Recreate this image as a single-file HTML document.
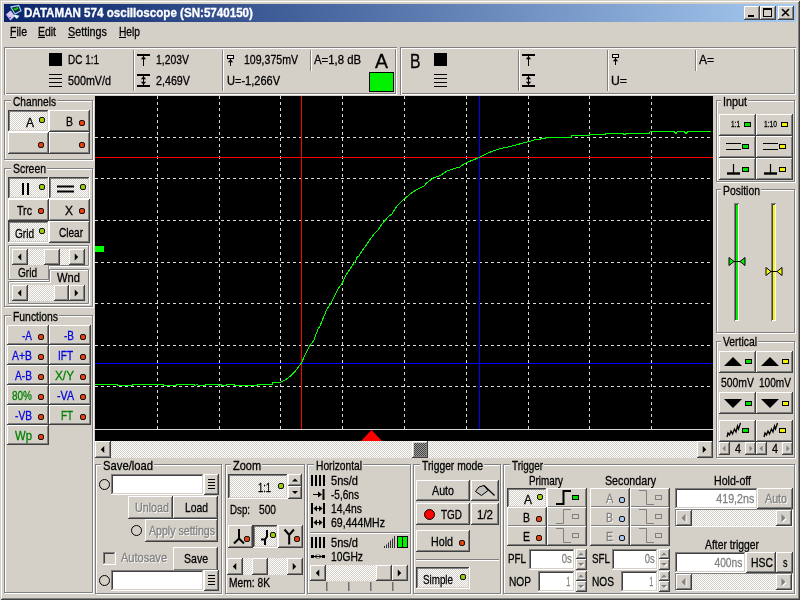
<!DOCTYPE html>
<html><head><meta charset="utf-8"><title>DATAMAN 574 oscilloscope</title>
<style>
html,body{margin:0;padding:0}
body{width:800px;height:600px;overflow:hidden;background:#d4d0c8;position:relative;font-family:"Liberation Sans",sans-serif;font-size:13px;color:#000}
div,span.t,svg.a{position:absolute;box-sizing:border-box}
#root{left:0;top:0;width:800px;height:600px;will-change:transform}
span.t{white-space:nowrap;line-height:1;transform-origin:0 50%;-webkit-text-stroke:0.3px}
.bu{background:#d4d0c8;box-shadow:inset -1px -1px #404040,inset 1px 1px #fff,inset -2px -2px #808080,inset 2px 2px #d4d0c8}
.bd{background:#e9e7e3;background:repeating-conic-gradient(#fff 0 25%,#d4d0c8 0 50%) 0 0/2px 2px;box-shadow:inset -1px -1px #fff,inset 1px 1px #404040,inset -2px -2px #d4d0c8,inset 2px 2px #808080}
.dith{background:repeating-conic-gradient(#fff 0 25%,#d4d0c8 0 50%) 0 0/2px 2px}
.dkd{background:repeating-conic-gradient(#404040 0 25%,#a0a0a0 0 50%) 0 0/2px 2px}
.grp{border:1px solid #808080;box-shadow:1px 1px 0 #fff,inset 1px 1px 0 #fff}
.sunk{background:#fff;box-shadow:inset -1px -1px #fff,inset 1px 1px #808080,inset -2px -2px #d4d0c8,inset 2px 2px #404040}
.led{border-radius:2px;border:1px solid #101010}
.rled{border:1px solid #000}
.dis{color:#808080;text-shadow:1px 1px 0 #fff}
.sm{-webkit-text-stroke:0.35px #000}
</style></head>
<body><div id="root">
<div class="" style="left:0px;top:0px;width:800px;height:600px;box-shadow:inset 1px 1px #d4d0c8,inset -1px -1px #404040,inset 2px 2px #fff,inset -2px -2px #808080;"></div>
<div class="" style="left:4px;top:4px;width:792px;height:18px;background:linear-gradient(90deg,#0a246a 0%,#a6caf0 100%);"></div>
<svg class="a" style="left:4px;top:4px" width="18" height="18" viewBox="0 0 18 18" ><polygon points="2,10.5 6.5,6.5 11,12 6.5,16.5" fill="#d8c8f0"/><polygon points="2,10.5 6.5,16.5 6.5,15 3,10.5" fill="#b8a8d8"/><polygon points="6,2.5 15,0.8 17.8,7 10.8,10.8" fill="#a8d0f8"/><polygon points="7.8,3.4 14.4,2.2 16.3,6.6 11.2,9.2" fill="#102838"/><path d="M9.5 6.5L11 4.2L11.8 6.2L13.2 3.4L14 5.4" stroke="#00ff00" stroke-width="0.9" fill="none"/><polygon points="10.8,10.8 15.5,11.8 12.8,15 9.6,11.8" fill="#e8f4ff"/><rect x="5.5" y="13" width="1.2" height="1.2" fill="#2020ff"/></svg>
<span class="t " style="left:24px;top:6.84px;font-size:12px;transform:scaleX(0.966);color:#fff;font-weight:bold;">DATAMAN 574 oscilloscope (SN:5740150)</span>
<div class="bu " style="left:744px;top:6px;width:16px;height:14px;"></div>
<div class="bu " style="left:760px;top:6px;width:16px;height:14px;"></div>
<div class="bu " style="left:778px;top:6px;width:16px;height:14px;"></div>
<svg class="a" style="left:744px;top:6px" width="50" height="14" viewBox="0 0 50 14" ><rect x="4" y="9" width="6" height="2" fill="#000"/><rect x="19.5" y="2.5" width="8" height="8" fill="none" stroke="#000"/><rect x="19" y="2" width="9" height="2" fill="#000"/><path d="M38 3 L45 10 M45 3 L38 10" stroke="#000" stroke-width="1.6"/></svg>
<span class="t " style="left:10px;top:25.00px;font-size:13px;transform:scaleX(0.812);">File</span>
<span class="t " style="left:38px;top:25.00px;font-size:13px;transform:scaleX(0.804);">Edit</span>
<span class="t " style="left:68px;top:25.00px;font-size:13px;transform:scaleX(0.830);">Settings</span>
<span class="t " style="left:119px;top:25.00px;font-size:13px;transform:scaleX(0.785);">Help</span>
<div class="" style="left:10px;top:37px;width:6px;height:1px;background:#000;"></div>
<div class="" style="left:38px;top:37px;width:7px;height:1px;background:#000;"></div>
<div class="" style="left:68px;top:37px;width:7px;height:1px;background:#000;"></div>
<div class="" style="left:119px;top:37px;width:7px;height:1px;background:#000;"></div>
<div class="" style="left:4px;top:47px;width:393px;height:48px;box-shadow:inset 1px 1px #808080,inset -1px -1px #fff,inset 2px 2px #fff,inset -2px -2px #808080;"></div>
<div class="" style="left:400px;top:47px;width:396px;height:48px;box-shadow:inset 1px 1px #808080,inset -1px -1px #fff,inset 2px 2px #fff,inset -2px -2px #808080;"></div>
<div class="" style="left:49px;top:53px;width:13px;height:13px;background:#000;"></div>
<svg class="a" style="left:49px;top:74px" width="13" height="13" viewBox="0 0 13 13" ><path d="M0 .5h13M0 4.5h13M0 8.5h13M0 12.5h13" stroke="#000"/></svg>
<span class="t " style="left:67.5px;top:53.00px;font-size:13px;transform:scaleX(0.766);">DC 1:1</span>
<span class="t " style="left:67.5px;top:74.00px;font-size:13px;transform:scaleX(0.826);">500mV/d</span>
<div class="" style="left:133px;top:50px;width:1px;height:41px;background:#808080;"></div>
<div class="" style="left:134px;top:50px;width:1px;height:41px;background:#fff;"></div>
<svg class="a" style="left:137px;top:54px" width="13" height="13" viewBox="0 0 13 13" ><rect x="0" y="0" width="13" height="2"/><path d="M6.5 2V12" stroke="#000"/><polygon points="3.8,5.2 9.2,5.2 6.5,2.2"/></svg>
<svg class="a" style="left:137px;top:74px" width="13" height="13" viewBox="0 0 13 13" ><rect x="0" y="0" width="13" height="2"/><rect x="0" y="11" width="13" height="2"/><path d="M6.5 2V11" stroke="#000"/><polygon points="3.8,5.2 9.2,5.2 6.5,2.2"/><polygon points="3.8,7.8 9.2,7.8 6.5,10.8"/></svg>
<span class="t " style="left:156px;top:53.00px;font-size:13px;transform:scaleX(0.801);">1,203V</span>
<span class="t " style="left:156px;top:74.00px;font-size:13px;transform:scaleX(0.825);">2,469V</span>
<div class="" style="left:222px;top:50px;width:1px;height:41px;background:#808080;"></div>
<div class="" style="left:223px;top:50px;width:1px;height:41px;background:#fff;"></div>
<svg class="a" style="left:227px;top:55px" width="8" height="12" viewBox="0 0 8 12" ><rect x="0.5" y="0.5" width="6" height="3" fill="#e8e8e8" stroke="#000"/><path d="M3.5 4V11" stroke="#000"/><polygon points="0.8,7.2 6.2,7.2 3.5,4.2"/></svg>
<span class="t " style="left:243.5px;top:53.00px;font-size:13px;transform:scaleX(0.812);">109,375mV</span>
<span class="t " style="left:227px;top:74.00px;font-size:13px;transform:scaleX(0.848);">U=-1,266V</span>
<div class="" style="left:310px;top:50px;width:1px;height:21px;background:#808080;"></div>
<div class="" style="left:311px;top:50px;width:1px;height:21px;background:#fff;"></div>
<span class="t " style="left:314px;top:53.00px;font-size:13px;transform:scaleX(0.873);">A=1,8 dB</span>
<span class="t " style="left:375px;top:51.07px;font-size:20px;transform:scaleX(0.974);">A</span>
<div class="" style="left:369px;top:72px;width:25px;height:20px;background:#00f000;border:1px solid #000;"></div>
<span class="t " style="left:409.7px;top:51.07px;font-size:20px;transform:scaleX(0.787);">B</span>
<div class="" style="left:434px;top:53px;width:13px;height:13px;background:#000;"></div>
<svg class="a" style="left:434px;top:74px" width="13" height="13" viewBox="0 0 13 13" ><path d="M0 .5h13M0 4.5h13M0 8.5h13M0 12.5h13" stroke="#000"/></svg>
<div class="" style="left:518px;top:50px;width:1px;height:41px;background:#808080;"></div>
<div class="" style="left:519px;top:50px;width:1px;height:41px;background:#fff;"></div>
<svg class="a" style="left:522px;top:54px" width="13" height="13" viewBox="0 0 13 13" ><rect x="0" y="0" width="13" height="2"/><path d="M6.5 2V12" stroke="#000"/><polygon points="3.8,5.2 9.2,5.2 6.5,2.2"/></svg>
<svg class="a" style="left:522px;top:74px" width="13" height="13" viewBox="0 0 13 13" ><rect x="0" y="0" width="13" height="2"/><rect x="0" y="11" width="13" height="2"/><path d="M6.5 2V11" stroke="#000"/><polygon points="3.8,5.2 9.2,5.2 6.5,2.2"/><polygon points="3.8,7.8 9.2,7.8 6.5,10.8"/></svg>
<div class="" style="left:607px;top:50px;width:1px;height:41px;background:#808080;"></div>
<div class="" style="left:608px;top:50px;width:1px;height:41px;background:#fff;"></div>
<svg class="a" style="left:612px;top:54px" width="10" height="13" viewBox="0 0 10 13" ><rect x="0.5" y="0.5" width="6" height="3" fill="#e8e8e8" stroke="#000"/><path d="M3.5 4V11" stroke="#000"/><polygon points="0.8,7.2 6.2,7.2 3.5,4.2"/></svg>
<span class="t " style="left:611px;top:74.00px;font-size:13px;transform:scaleX(0.942);">U=</span>
<div class="" style="left:695px;top:50px;width:1px;height:21px;background:#808080;"></div>
<div class="" style="left:696px;top:50px;width:1px;height:21px;background:#fff;"></div>
<span class="t " style="left:699px;top:53.00px;font-size:13px;transform:scaleX(0.922);">A=</span>
<svg class="a" style="left:95px;top:96px;background:#000" width="618" height="345" viewBox="0 0 618 345"><path d="M62.5 0V333" stroke="#d8d8d8" stroke-dasharray="3 3"/><path d="M124.5 0V333" stroke="#d8d8d8" stroke-dasharray="3 3"/><path d="M185.5 0V333" stroke="#d8d8d8" stroke-dasharray="3 3"/><path d="M247.5 0V333" stroke="#d8d8d8" stroke-dasharray="3 3"/><path d="M309.5 0V333" stroke="#d8d8d8" stroke-dasharray="3 3"/><path d="M371.5 0V333" stroke="#d8d8d8" stroke-dasharray="3 3"/><path d="M433.5 0V333" stroke="#d8d8d8" stroke-dasharray="3 3"/><path d="M494.5 0V333" stroke="#d8d8d8" stroke-dasharray="3 3"/><path d="M556.5 0V333" stroke="#d8d8d8" stroke-dasharray="3 3"/><path d="M0 41.5H618" stroke="#d8d8d8" stroke-dasharray="3 3"/><path d="M0 82.5H618" stroke="#d8d8d8" stroke-dasharray="3 3"/><path d="M0 124.5H618" stroke="#d8d8d8" stroke-dasharray="3 3"/><path d="M0 166.5H618" stroke="#d8d8d8" stroke-dasharray="3 3"/><path d="M0 207.5H618" stroke="#d8d8d8" stroke-dasharray="3 3"/><path d="M0 249.5H618" stroke="#d8d8d8" stroke-dasharray="3 3"/><path d="M0 290.5H618" stroke="#d8d8d8" stroke-dasharray="3 3"/><path d="M0 333.5H618" stroke="#d8d8d8"/><path d="M0 61.5H618" stroke="#ff0000"/><path d="M206.5 0V333" stroke="#ff0000"/><path d="M0 267.5H618" stroke="#0000ff"/><path d="M384.5 0V333" stroke="#0000ff"/><path d="M0.0 288.5 L22.0 288.5 L23.0 289.5 L29.0 289.5 L30.0 289.0 L32.0 289.5 L37.0 289.5 L38.0 288.5 L62.0 288.5 L63.0 289.0 L65.0 288.5 L68.0 288.5 L69.0 289.5 L73.0 289.5 L74.0 289.0 L76.0 289.5 L81.0 289.5 L82.0 288.5 L99.0 288.5 L100.0 289.5 L102.0 288.5 L104.0 289.5 L110.0 289.5 L111.0 288.5 L123.0 288.5 L124.0 289.5 L126.0 288.5 L127.0 289.5 L131.0 289.5 L132.0 288.5 L139.0 288.5 L140.0 289.5 L146.0 289.5 L147.0 289.5 L162.0 289.5 L163.0 288.5 L177.0 288.5 L178.0 286.5 L185.0 286.3 L188.0 285.0 L190.0 284.0 L193.0 282.0 L195.0 280.4 L198.0 277.5 L200.0 275.4 L203.0 271.5 L205.0 269.0 L206.4 267.0 L208.0 263.5 L210.0 259.0 L212.0 255.0 L214.0 251.0 L217.0 247.0 L219.0 244.0 L222.6 234.0 L225.0 230.0 L229.0 220.0 L232.0 213.0 L236.0 207.0 L239.0 201.0 L242.0 195.0 L245.0 190.0 L247.4 187.0 L250.0 181.0 L253.0 176.0 L257.0 170.0 L260.0 166.0 L262.0 161.5 L264.0 160.0 L267.0 155.0 L270.0 151.0 L274.0 145.0 L277.0 141.0 L280.0 137.0 L283.0 134.0 L287.0 128.0 L290.0 124.5 L294.0 120.0 L297.0 118.0 L300.0 113.0 L302.0 110.0 L305.0 107.0 L307.0 105.0 L311.0 101.5 L314.0 99.0 L318.0 96.0 L321.0 94.0 L325.0 92.0 L329.0 90.0 L331.0 87.5 L333.0 86.0 L336.0 83.5 L339.0 81.6 L342.0 80.5 L345.0 79.6 L349.0 77.0 L352.0 75.0 L356.0 73.5 L359.0 72.6 L362.0 71.8 L365.0 71.0 L367.0 69.5 L369.0 68.0 L373.0 66.0 L377.0 64.4 L381.0 62.8 L384.0 61.4 L389.0 59.0 L393.0 57.0 L398.0 55.0 L403.0 53.4 L408.0 52.0 L413.0 51.0 L417.0 50.0 L421.0 49.0 L426.0 47.6 L430.0 46.6 L435.0 45.3 L441.0 43.5 L445.5 43.5 L446.0 42.5 L450.0 42.5 L451.0 41.5 L476.0 41.5 L477.0 39.5 L494.0 39.5 L495.0 38.5 L510.0 38.5 L511.0 37.5 L528.0 37.5 L529.5 38.8 L531.0 37.5 L554.0 37.5 L555.5 35.5 L579.0 35.5 L581.0 37.5 L582.5 35.5 L589.0 35.5 L591.0 37.5 L593.0 35.5 L616.0 35.5" stroke="#00ff00" stroke-width="1" fill="none" shape-rendering="crispEdges"/><rect x="0" y="150" width="9" height="6" fill="#00ff00"/><polygon points="276.5,334 266,345 287,345" fill="#ff0000"/></svg>
<div class="dith" style="left:95px;top:441px;width:618px;height:17px;"></div>
<div class="bu " style="left:95px;top:441px;width:16px;height:17px;"></div>
<div class="bu " style="left:697px;top:441px;width:16px;height:17px;"></div>
<svg class="a" style="left:95px;top:441px" width="618" height="17" viewBox="0 0 618 17" ><polygon points="9.25,5.0 9.25,12.0 5.75,8.5" fill="#000"/><polygon points="607.75,5.0 607.75,12.0 611.25,8.5" fill="#000"/></svg>
<div class="bu dkd" style="left:412px;top:441px;width:16px;height:17px;"></div>
<div class="grp" style="left:4px;top:100px;width:89px;height:60px;"></div>
<div class="" style="left:11px;top:95px;width:46px;height:13px;background:#d4d0c8;"></div>
<span class="t " style="left:13px;top:95.00px;font-size:13px;transform:scaleX(0.783);">Channels</span>
<div class="bd " style="left:8px;top:110px;width:41px;height:22px;"></div>
<div class="bu " style="left:49px;top:110px;width:41px;height:22px;"></div>
<div class="bu " style="left:8px;top:132px;width:41px;height:22px;"></div>
<div class="bu " style="left:49px;top:132px;width:41px;height:22px;"></div>
<span class="t " style="left:26px;top:116.00px;font-size:13px;transform:scaleX(0.923);">A</span>
<div class="led" style="left:39px;top:117px;width:6px;height:6px;background:#9acd0a;"></div>
<span class="t " style="left:66px;top:115.00px;font-size:13px;transform:scaleX(0.807);">B</span>
<div class="led" style="left:79px;top:120px;width:6px;height:6px;background:#e8400a;"></div>
<div class="led" style="left:38px;top:142px;width:6px;height:6px;background:#e8400a;"></div>
<div class="led" style="left:79px;top:142px;width:6px;height:6px;background:#e8400a;"></div>
<div class="grp" style="left:4px;top:168px;width:89px;height:139px;"></div>
<div class="" style="left:11px;top:163px;width:36px;height:13px;background:#d4d0c8;"></div>
<span class="t " style="left:13px;top:162.00px;font-size:13px;transform:scaleX(0.801);">Screen</span>
<div class="bd " style="left:8px;top:177px;width:41px;height:22px;"></div>
<div class="bd " style="left:49px;top:177px;width:41px;height:22px;"></div>
<div class="bu " style="left:8px;top:199px;width:41px;height:22px;"></div>
<div class="bu " style="left:49px;top:199px;width:41px;height:22px;"></div>
<div class="bd " style="left:8px;top:221px;width:41px;height:22px;"></div>
<div class="bu " style="left:49px;top:221px;width:41px;height:22px;"></div>
<svg class="a" style="left:20px;top:182px" width="12" height="13" viewBox="0 0 12 13" ><path d="M3 1v12M8 1v12" stroke="#000" stroke-width="2"/></svg>
<div class="led" style="left:39px;top:184px;width:6px;height:6px;background:#9acd0a;"></div>
<svg class="a" style="left:57px;top:182px" width="18" height="12" viewBox="0 0 18 12" ><path d="M0 4.5h17M0 9.5h17" stroke="#000" stroke-width="2"/></svg>
<div class="led" style="left:80px;top:184px;width:6px;height:6px;background:#9acd0a;"></div>
<span class="t " style="left:17px;top:204.00px;font-size:13px;transform:scaleX(0.820);">Trc</span>
<div class="led" style="left:38px;top:208px;width:6px;height:6px;background:#e8400a;"></div>
<span class="t " style="left:65px;top:204.00px;font-size:13px;transform:scaleX(0.923);">X</span>
<div class="led" style="left:79px;top:208px;width:6px;height:6px;background:#e8400a;"></div>
<span class="t " style="left:14.5px;top:227.00px;font-size:13px;transform:scaleX(0.774);">Grid</span>
<div class="led" style="left:39px;top:228px;width:6px;height:6px;background:#9acd0a;"></div>
<span class="t " style="left:58.5px;top:226.00px;font-size:13px;transform:scaleX(0.773);">Clear</span>
<svg class="a" style="left:0px;top:0px" width="100" height="310" viewBox="0 0 100 310" ><g fill="none"><g transform="translate(1,1)" stroke="#fff"><path d="M8.5 245.5H88.5V265.5H48.5V279.5H8.5Z"/><path d="M8.5 281.5H49.5V269.5H88.5V303.5H8.5Z"/></g><g stroke="#808080"><path d="M8.5 245.5H88.5V265.5H48.5V279.5H8.5Z"/><path d="M8.5 281.5H49.5V269.5H88.5V303.5H8.5Z"/></g></g></svg>
<div class="dith" style="left:12px;top:249px;width:73px;height:16px;"></div>
<div class="bu " style="left:12px;top:249px;width:16px;height:16px;"></div>
<div class="bu " style="left:69px;top:249px;width:16px;height:16px;"></div>
<svg class="a" style="left:12px;top:249px" width="73" height="16" viewBox="0 0 73 16" ><polygon points="9.25,4.5 9.25,11.5 5.75,8.0" fill="#000"/><polygon points="62.75,4.5 62.75,11.5 66.25,8.0" fill="#000"/></svg>
<div class="bu " style="left:44px;top:249px;width:16px;height:16px;"></div>
<span class="t " style="left:17.5px;top:266.00px;font-size:13px;transform:scaleX(0.774);">Grid</span>
<span class="t " style="left:57px;top:271.00px;font-size:13px;transform:scaleX(0.860);">Wnd</span>
<div class="dith" style="left:12px;top:285px;width:73px;height:16px;"></div>
<div class="bu " style="left:12px;top:285px;width:16px;height:16px;"></div>
<div class="bu " style="left:69px;top:285px;width:16px;height:16px;"></div>
<svg class="a" style="left:12px;top:285px" width="73" height="16" viewBox="0 0 73 16" ><polygon points="9.25,4.5 9.25,11.5 5.75,8.0" fill="#000"/><polygon points="62.75,4.5 62.75,11.5 66.25,8.0" fill="#000"/></svg>
<div class="bu " style="left:54px;top:285px;width:15px;height:16px;"></div>
<div class="grp" style="left:4px;top:315px;width:89px;height:278px;"></div>
<div class="" style="left:11px;top:310px;width:48px;height:13px;background:#d4d0c8;"></div>
<span class="t " style="left:13px;top:310.00px;font-size:13px;transform:scaleX(0.798);">Functions</span>
<div class="bu " style="left:7px;top:325px;width:42px;height:20px;"></div>
<span class="t " style="left:22px;top:329.00px;font-size:13px;transform:scaleX(0.769);color:#0000e0;">-A</span>
<div class="led" style="left:38px;top:334px;width:6px;height:6px;background:#e8400a;"></div>
<div class="bu " style="left:49px;top:325px;width:42px;height:20px;"></div>
<span class="t " style="left:64px;top:329.00px;font-size:13px;transform:scaleX(0.769);color:#0000e0;">-B</span>
<div class="led" style="left:80px;top:334px;width:6px;height:6px;background:#e8400a;"></div>
<div class="bu " style="left:7px;top:345px;width:42px;height:20px;"></div>
<span class="t " style="left:12px;top:349.00px;font-size:13px;transform:scaleX(0.802);color:#0000e0;">A+B</span>
<div class="led" style="left:38px;top:354px;width:6px;height:6px;background:#e8400a;"></div>
<div class="bu " style="left:49px;top:345px;width:42px;height:20px;"></div>
<span class="t " style="left:58px;top:349.00px;font-size:13px;transform:scaleX(0.769);color:#0000e0;">IFT</span>
<div class="led" style="left:80px;top:354px;width:6px;height:6px;background:#e8400a;"></div>
<div class="bu " style="left:7px;top:365px;width:42px;height:20px;"></div>
<span class="t " style="left:14.5px;top:369.00px;font-size:13px;transform:scaleX(0.784);color:#0000e0;">A-B</span>
<div class="led" style="left:38px;top:374px;width:6px;height:6px;background:#e8400a;"></div>
<div class="bu " style="left:49px;top:365px;width:42px;height:20px;"></div>
<span class="t " style="left:55px;top:369.00px;font-size:13px;transform:scaleX(0.907);color:#008000;">X/Y</span>
<div class="led" style="left:80px;top:374px;width:6px;height:6px;background:#e8400a;"></div>
<div class="bu " style="left:7px;top:385px;width:42px;height:20px;"></div>
<span class="t " style="left:12px;top:389.00px;font-size:13px;transform:scaleX(0.769);color:#008000;">80%</span>
<div class="led" style="left:38px;top:394px;width:6px;height:6px;background:#e8400a;"></div>
<div class="bu " style="left:49px;top:385px;width:42px;height:20px;"></div>
<span class="t " style="left:57px;top:389.00px;font-size:13px;transform:scaleX(0.821);color:#0000e0;">-VA</span>
<div class="led" style="left:80px;top:394px;width:6px;height:6px;background:#e8400a;"></div>
<div class="bu " style="left:7px;top:405px;width:42px;height:20px;"></div>
<span class="t " style="left:15px;top:409.00px;font-size:13px;transform:scaleX(0.784);color:#0000e0;">-VB</span>
<div class="led" style="left:38px;top:414px;width:6px;height:6px;background:#e8400a;"></div>
<div class="bu " style="left:49px;top:405px;width:42px;height:20px;"></div>
<span class="t " style="left:61px;top:409.00px;font-size:13px;transform:scaleX(0.756);color:#008000;">FT</span>
<div class="led" style="left:80px;top:414px;width:6px;height:6px;background:#e8400a;"></div>
<div class="bu " style="left:7px;top:425px;width:42px;height:20px;"></div>
<span class="t " style="left:15px;top:429.00px;font-size:13px;transform:scaleX(0.872);color:#008000;">Wp</span>
<div class="led" style="left:38px;top:434px;width:6px;height:6px;background:#e8400a;"></div>
<div class="grp" style="left:716px;top:100px;width:79px;height:82px;"></div>
<div class="" style="left:721px;top:95px;width:27px;height:13px;background:#d4d0c8;"></div>
<span class="t " style="left:723px;top:95.00px;font-size:13px;transform:scaleX(0.830);">Input</span>
<div class="bu " style="left:719px;top:114px;width:37px;height:22px;"></div>
<div class="bu " style="left:756px;top:114px;width:37px;height:22px;"></div>
<div class="bu " style="left:719px;top:136px;width:37px;height:22px;"></div>
<div class="bu " style="left:756px;top:136px;width:37px;height:22px;"></div>
<div class="bu " style="left:719px;top:158px;width:37px;height:22px;"></div>
<div class="bu " style="left:756px;top:158px;width:37px;height:22px;"></div>
<div class="rled" style="left:744px;top:122px;width:7px;height:5px;background:#00e000;"></div>
<div class="rled" style="left:781px;top:122px;width:7px;height:5px;background:#f0f000;"></div>
<div class="rled" style="left:742px;top:144px;width:7px;height:5px;background:#00e000;"></div>
<div class="rled" style="left:779px;top:144px;width:7px;height:5px;background:#f0f000;"></div>
<div class="rled" style="left:742px;top:167px;width:7px;height:5px;background:#00e000;"></div>
<div class="rled" style="left:779px;top:167px;width:7px;height:5px;background:#f0f000;"></div>
<span class="t sm" style="left:731px;top:120.38px;font-size:9px;transform:scaleX(0.719);">1:1</span>
<span class="t sm" style="left:764px;top:120.38px;font-size:9px;transform:scaleX(0.742);">1:10</span>
<svg class="a" style="left:726px;top:140px" width="16" height="12" viewBox="0 0 16 12" ><path d="M0 3.5H15M0 9.5H15" stroke="#000" stroke-width="1.2"/></svg>
<svg class="a" style="left:727px;top:163px" width="14" height="13" viewBox="0 0 14 13" ><path d="M6.5 1V10" stroke="#000" stroke-width="1.2"/><path d="M0 10.5H13" stroke="#000" stroke-width="2.4"/></svg>
<svg class="a" style="left:763px;top:140px" width="16" height="12" viewBox="0 0 16 12" ><path d="M0 3.5H15M0 9.5H15" stroke="#000" stroke-width="1.2"/></svg>
<svg class="a" style="left:764px;top:163px" width="14" height="13" viewBox="0 0 14 13" ><path d="M6.5 1V10" stroke="#000" stroke-width="1.2"/><path d="M0 10.5H13" stroke="#000" stroke-width="2.4"/></svg>
<div class="grp" style="left:716px;top:189px;width:79px;height:144px;"></div>
<div class="" style="left:721px;top:184px;width:40px;height:13px;background:#d4d0c8;"></div>
<span class="t " style="left:723px;top:184.00px;font-size:13px;transform:scaleX(0.800);">Position</span>
<div class="" style="left:734px;top:203px;width:5px;height:118px;background:#00f000;box-shadow:inset 1px 1px #808080,inset -1px -1px #fff,inset 2px 2px #404040;"></div>
<svg class="a" style="left:727.5px;top:256px" width="18" height="11" viewBox="0 0 18 11" ><polygon points="1,1.5 1,9.5 6,5.5" fill="#00f000" stroke="#000"/><polygon points="17,1.5 17,9.5 12,5.5" fill="#00f000" stroke="#000"/><path d="M6 5.5H12" stroke="#000"/></svg>
<div class="" style="left:771px;top:203px;width:5px;height:118px;background:#f8f800;box-shadow:inset 1px 1px #808080,inset -1px -1px #fff,inset 2px 2px #404040;"></div>
<svg class="a" style="left:764.5px;top:266px" width="18" height="11" viewBox="0 0 18 11" ><polygon points="1,1.5 1,9.5 6,5.5" fill="#f8f800" stroke="#000"/><polygon points="17,1.5 17,9.5 12,5.5" fill="#f8f800" stroke="#000"/><path d="M6 5.5H12" stroke="#000"/></svg>
<div class="grp" style="left:716px;top:341px;width:79px;height:117px;"></div>
<div class="" style="left:721px;top:336px;width:37px;height:13px;background:#d4d0c8;"></div>
<span class="t " style="left:723px;top:335.00px;font-size:13px;transform:scaleX(0.798);">Vertical</span>
<div class="bu " style="left:719px;top:351px;width:37px;height:22px;"></div>
<div class="bu " style="left:719px;top:392px;width:37px;height:22px;"></div>
<div class="bu " style="left:719px;top:420px;width:37px;height:22px;"></div>
<svg class="a" style="left:720px;top:351px" width="36" height="22" viewBox="0 0 36 22" ><polygon points="4,15 22,15 13,6" fill="#000"/></svg>
<div class="rled" style="left:745px;top:359px;width:7px;height:5px;background:#00e000;"></div>
<svg class="a" style="left:720px;top:392px" width="36" height="22" viewBox="0 0 36 22" ><polygon points="4,7 22,7 13,16" fill="#000"/></svg>
<div class="rled" style="left:745px;top:401px;width:7px;height:5px;background:#00e000;"></div>
<svg class="a" style="left:720px;top:420px" width="36" height="22" viewBox="0 0 36 22" ><path d="M7 17L8 13L9.5 15L11 11L12.5 14L14.5 9L16 12L17.5 6L18.5 9L20.5 3" stroke="#000" stroke-width="1.3" fill="none"/></svg>
<div class="rled" style="left:742px;top:428px;width:7px;height:5px;background:#00e000;"></div>
<div class="bu " style="left:719px;top:442px;width:11px;height:13px;"></div>
<div class="bu " style="left:745px;top:442px;width:11px;height:13px;"></div>
<svg class="a" style="left:719px;top:442px" width="37" height="13" viewBox="0 0 37 13" ><polygon points="6.5,3.5 6.5,9.5 3.5,6.5" fill="#808080"/><polygon points="30.5,3.5 30.5,9.5 33.5,6.5" fill="#808080"/></svg>
<span class="t " style="left:735px;top:442.00px;font-size:13px;transform:scaleX(0.830);">4</span>
<div class="bu " style="left:756px;top:351px;width:37px;height:22px;"></div>
<div class="bu " style="left:756px;top:392px;width:37px;height:22px;"></div>
<div class="bu " style="left:756px;top:420px;width:37px;height:22px;"></div>
<svg class="a" style="left:757px;top:351px" width="36" height="22" viewBox="0 0 36 22" ><polygon points="4,15 22,15 13,6" fill="#000"/></svg>
<div class="rled" style="left:782px;top:359px;width:7px;height:5px;background:#f0f000;"></div>
<svg class="a" style="left:757px;top:392px" width="36" height="22" viewBox="0 0 36 22" ><polygon points="4,7 22,7 13,16" fill="#000"/></svg>
<div class="rled" style="left:782px;top:401px;width:7px;height:5px;background:#f0f000;"></div>
<svg class="a" style="left:757px;top:420px" width="36" height="22" viewBox="0 0 36 22" ><path d="M7 17L8 13L9.5 15L11 11L12.5 14L14.5 9L16 12L17.5 6L18.5 9L20.5 3" stroke="#000" stroke-width="1.3" fill="none"/></svg>
<div class="rled" style="left:779px;top:428px;width:7px;height:5px;background:#f0f000;"></div>
<div class="bu " style="left:756px;top:442px;width:11px;height:13px;"></div>
<div class="bu " style="left:782px;top:442px;width:11px;height:13px;"></div>
<svg class="a" style="left:756px;top:442px" width="37" height="13" viewBox="0 0 37 13" ><polygon points="6.5,3.5 6.5,9.5 3.5,6.5" fill="#808080"/><polygon points="30.5,3.5 30.5,9.5 33.5,6.5" fill="#808080"/></svg>
<span class="t " style="left:772px;top:442.00px;font-size:13px;transform:scaleX(0.830);">4</span>
<span class="t " style="left:721px;top:376.00px;font-size:13px;transform:scaleX(0.801);">500mV</span>
<span class="t " style="left:759px;top:376.00px;font-size:13px;transform:scaleX(0.777);">100mV</span>
<div class="grp" style="left:95px;top:464px;width:127px;height:130px;"></div>
<div class="" style="left:101px;top:459px;width:53px;height:13px;background:#d4d0c8;"></div>
<span class="t " style="left:103px;top:459.00px;font-size:13px;transform:scaleX(0.865);">Save/load</span>
<div class="" style="left:98.5px;top:479.0px;width:11px;height:11px;border:1px solid #000;border-radius:50%;"></div>
<div class="sunk" style="left:111px;top:474px;width:93px;height:21px;"></div>
<div class="bu " style="left:204px;top:474px;width:15px;height:21px;"></div>
<svg class="a" style="left:204px;top:474px" width="15" height="21" viewBox="0 0 15 21" ><path d="M4 5.5h7M4 8.5h7M4 11.5h7M4 14.5h7" stroke="#000"/></svg>
<div class="bu " style="left:128px;top:496px;width:45px;height:23px;"></div>
<div class="bu " style="left:173px;top:496px;width:45px;height:23px;"></div>
<span class="t dis" style="left:135px;top:501.00px;font-size:13px;transform:scaleX(0.825);">Unload</span>
<span class="t " style="left:185px;top:501.00px;font-size:13px;transform:scaleX(0.795);">Load</span>
<div class="" style="left:131.0px;top:525.0px;width:11px;height:11px;border:1px solid #000;border-radius:50%;"></div>
<div class="bu " style="left:145px;top:519px;width:73px;height:23px;"></div>
<span class="t dis" style="left:149px;top:524.00px;font-size:13px;transform:scaleX(0.815);">Apply settings</span>
<div class="" style="left:103px;top:552px;width:13px;height:13px;background:#d4d0c8;box-shadow:inset -1px -1px #fff,inset 1px 1px #808080,inset -2px -2px #d4d0c8,inset 2px 2px #404040;"></div>
<span class="t dis" style="left:121px;top:551.00px;font-size:13px;transform:scaleX(0.849);">Autosave</span>
<div class="bu " style="left:173px;top:547px;width:45px;height:24px;"></div>
<span class="t " style="left:184px;top:552.00px;font-size:13px;transform:scaleX(0.810);">Save</span>
<div class="" style="left:98.5px;top:575.0px;width:11px;height:11px;border:1px solid #000;border-radius:50%;"></div>
<div class="sunk" style="left:111px;top:570px;width:93px;height:21px;"></div>
<div class="bu " style="left:204px;top:570px;width:15px;height:21px;"></div>
<svg class="a" style="left:204px;top:570px" width="15" height="21" viewBox="0 0 15 21" ><path d="M4 5.5h7M4 8.5h7M4 11.5h7M4 14.5h7" stroke="#000"/></svg>
<div class="grp" style="left:225px;top:464px;width:80px;height:130px;"></div>
<div class="" style="left:230.5px;top:459px;width:31px;height:13px;background:#d4d0c8;"></div>
<span class="t " style="left:232.5px;top:459.00px;font-size:13px;transform:scaleX(0.843);">Zoom</span>
<div class="bd " style="left:228px;top:474px;width:60px;height:25px;"></div>
<span class="t " style="left:258px;top:481.00px;font-size:13px;transform:scaleX(0.719);">1:1</span>
<div class="led" style="left:277.5px;top:483px;width:6px;height:6px;background:#9acd0a;"></div>
<div class="bu " style="left:288px;top:474px;width:14px;height:12px;"></div>
<div class="bu " style="left:288px;top:486px;width:14px;height:13px;"></div>
<svg class="a" style="left:288px;top:474px" width="14" height="25" viewBox="0 0 14 25" ><polygon points="4,7.5 10,7.5 7,4.5" fill="#000"/><polygon points="4,17.0 10,17.0 7,20.0" fill="#000"/></svg>
<span class="t " style="left:230px;top:503.00px;font-size:13px;transform:scaleX(0.748);">Dsp:</span>
<span class="t " style="left:259px;top:503.00px;font-size:13px;transform:scaleX(0.784);">500</span>
<div class="bu " style="left:228px;top:525px;width:25px;height:23px;"></div>
<div class="bd " style="left:253px;top:525px;width:25px;height:23px;"></div>
<div class="bu " style="left:278px;top:525px;width:25px;height:23px;"></div>
<svg class="a" style="left:228px;top:525px" width="25" height="23" viewBox="0 0 25 23" ><path d="M11 4V14.5M11 13.5L6 18.5M11 13.5L16 18.5" stroke="#000" stroke-width="2" fill="none"/></svg>
<div class="led" style="left:244px;top:536px;width:6px;height:6px;background:#e8400a;"></div>
<svg class="a" style="left:253px;top:525px" width="25" height="23" viewBox="0 0 25 23" ><path d="M14 5V11.5L12 14.5V20M8 14.5H12.5" stroke="#000" stroke-width="2" fill="none"/></svg>
<div class="led" style="left:270px;top:532px;width:6px;height:6px;background:#9acd0a;"></div>
<svg class="a" style="left:278px;top:525px" width="25" height="23" viewBox="0 0 25 23" ><path d="M6.5 4.5L11.2 10L15.9 4.5M11.2 9.5V19.5" stroke="#000" stroke-width="2" fill="none"/></svg>
<div class="led" style="left:294px;top:536px;width:6px;height:6px;background:#e8400a;"></div>
<div class="dith" style="left:227px;top:558px;width:76px;height:17px;"></div>
<div class="bu " style="left:227px;top:558px;width:16px;height:17px;"></div>
<div class="bu " style="left:287px;top:558px;width:16px;height:17px;"></div>
<svg class="a" style="left:227px;top:558px" width="76" height="17" viewBox="0 0 76 17" ><polygon points="9.25,5.0 9.25,12.0 5.75,8.5" fill="#000"/><polygon points="65.75,5.0 65.75,12.0 69.25,8.5" fill="#000"/></svg>
<div class="bu " style="left:252px;top:558px;width:16px;height:17px;"></div>
<span class="t " style="left:229px;top:576.00px;font-size:13px;transform:scaleX(0.788);">Mem: 8K</span>
<div class="grp" style="left:307px;top:464px;width:104px;height:130px;"></div>
<div class="" style="left:314px;top:459px;width:49px;height:13px;background:#d4d0c8;"></div>
<span class="t " style="left:316px;top:459.00px;font-size:13px;transform:scaleX(0.786);">Horizontal</span>
<svg class="a" style="left:311px;top:475px" width="14" height="11" viewBox="0 0 14 11" ><path d="M1 0V11M5 0V11M9 0V11M13 0V11" stroke="#000" stroke-width="2"/></svg>
<span class="t " style="left:331px;top:474.00px;font-size:13px;transform:scaleX(0.849);">5ns/d</span>
<svg class="a" style="left:311px;top:489px" width="15" height="11" viewBox="0 0 15 11" ><path d="M2 5.5H10" stroke="#000"/><polygon points="7,2.5 11,5.5 7,8.5" fill="#000"/><path d="M12.5 0V11" stroke="#000" stroke-width="2"/></svg>
<span class="t " style="left:331px;top:488.00px;font-size:13px;transform:scaleX(0.775);">-5,6ns</span>
<svg class="a" style="left:311px;top:503px" width="14" height="11" viewBox="0 0 14 11" ><path d="M1 0V11M13 0V11" stroke="#000" stroke-width="2"/><path d="M3 5.5H11" stroke="#000"/><polygon points="2.5,5.5 6,2.5 6,8.5" fill="#000"/><polygon points="11.5,5.5 8,2.5 8,8.5" fill="#000"/></svg>
<span class="t " style="left:331px;top:502.00px;font-size:13px;transform:scaleX(0.794);">14,4ns</span>
<svg class="a" style="left:311px;top:517px" width="14" height="11" viewBox="0 0 14 11" ><path d="M1 0V11M13 0V11" stroke="#000" stroke-width="2"/><path d="M3 5.5H11" stroke="#000"/><polygon points="2.5,5.5 6,2.5 6,8.5" fill="#000"/><polygon points="11.5,5.5 8,2.5 8,8.5" fill="#000"/></svg>
<span class="t " style="left:331px;top:516.00px;font-size:13px;transform:scaleX(0.812);">69,444MHz</span>
<div class="" style="left:310px;top:532px;width:99px;height:2px;border-top:1px solid #808080;border-bottom:1px solid #fff;"></div>
<svg class="a" style="left:311px;top:537px" width="14" height="11" viewBox="0 0 14 11" ><path d="M1 0V11M5 0V11M9 0V11M13 0V11" stroke="#000" stroke-width="2"/></svg>
<span class="t " style="left:331px;top:536.00px;font-size:13px;transform:scaleX(0.849);">5ns/d</span>
<svg class="a" style="left:311px;top:552px" width="15" height="9" viewBox="0 0 15 9" ><rect x="0" y="3" width="3" height="3" fill="#000"/><rect x="11" y="3" width="3" height="3" fill="#000"/><path d="M3 4.5H11" stroke="#000"/><path d="M6 2.5L4 4.5L6 6.5M8 2.5L10 4.5L8 6.5" stroke="#000" fill="none"/></svg>
<span class="t " style="left:331px;top:550.00px;font-size:13px;transform:scaleX(0.791);">10GHz</span>
<svg class="a" style="left:384px;top:536px" width="12" height="12" viewBox="0 0 12 12" ><path d="M0.5 12V10M2.5 12V8.5M4.5 12V6.5M6.5 12V4.5M8.5 12V2.5M10.5 12V0" stroke="#303030"/></svg>
<div class="" style="left:397px;top:536px;width:11px;height:12px;background:#00f000;border:1px solid #000;"></div>
<div class="" style="left:402px;top:536px;width:1px;height:12px;background:#000;"></div>
<div class="dith" style="left:310px;top:565px;width:98px;height:16px;"></div>
<div class="bu " style="left:310px;top:565px;width:16px;height:16px;"></div>
<div class="bu " style="left:392px;top:565px;width:16px;height:16px;"></div>
<svg class="a" style="left:310px;top:565px" width="98" height="16" viewBox="0 0 98 16" ><polygon points="9.25,4.5 9.25,11.5 5.75,8.0" fill="#000"/><polygon points="87.75,4.5 87.75,11.5 91.25,8.0" fill="#000"/></svg>
<div class="bu " style="left:376px;top:565px;width:16px;height:16px;"></div>
<div class="" style="left:326px;top:582px;width:2px;height:9px;border-left:1px solid #707070;border-right:1px solid #a0a0a0;"></div>
<div class="" style="left:348px;top:582px;width:2px;height:9px;border-left:1px solid #707070;border-right:1px solid #a0a0a0;"></div>
<div class="" style="left:370px;top:582px;width:2px;height:9px;border-left:1px solid #707070;border-right:1px solid #a0a0a0;"></div>
<div class="" style="left:392px;top:582px;width:2px;height:9px;border-left:1px solid #707070;border-right:1px solid #a0a0a0;"></div>
<div class="grp" style="left:413px;top:464px;width:88px;height:130px;"></div>
<div class="" style="left:419.5px;top:459px;width:64px;height:13px;background:#d4d0c8;"></div>
<span class="t " style="left:421.5px;top:459.00px;font-size:13px;transform:scaleX(0.794);">Trigger mode</span>
<div class="bu " style="left:416px;top:480px;width:54px;height:21px;"></div>
<span class="t " style="left:431.5px;top:484.00px;font-size:13px;transform:scaleX(0.823);">Auto</span>
<div class="bu " style="left:471px;top:480px;width:28px;height:21px;"></div>
<svg class="a" style="left:471px;top:480px" width="27" height="21" viewBox="0 0 27 21" ><polygon points="4.5,11.5 8,7 13,5.5 17,10.5 10.5,15.5" fill="#c0c0c0" stroke="#000"/><path d="M13 5.5L23.5 15.5" stroke="#000" stroke-width="1.2"/></svg>
<div class="bu " style="left:416px;top:503px;width:54px;height:22px;"></div>
<div class="" style="left:424px;top:509px;width:11px;height:11px;background:#ff0000;border:1px solid #000;border-radius:50%;"></div>
<span class="t " style="left:440.5px;top:508.00px;font-size:13px;transform:scaleX(0.765);">TGD</span>
<div class="bu " style="left:471px;top:503px;width:28px;height:22px;"></div>
<span class="t " style="left:477px;top:508.00px;font-size:13px;transform:scaleX(0.885);">1/2</span>
<div class="bu " style="left:416px;top:530px;width:54px;height:22px;"></div>
<span class="t " style="left:430.5px;top:535.00px;font-size:13px;transform:scaleX(0.823);">Hold</span>
<div class="led" style="left:459px;top:539.5px;width:6px;height:6px;background:#e8400a;"></div>
<div class="" style="left:416px;top:559px;width:83px;height:2px;border-top:1px solid #808080;border-bottom:1px solid #fff;"></div>
<div class="bd " style="left:416px;top:567px;width:54px;height:22px;"></div>
<span class="t " style="left:423px;top:573.00px;font-size:13px;transform:scaleX(0.755);">Simple</span>
<div class="led" style="left:460px;top:574px;width:6px;height:6px;background:#9acd0a;"></div>
<div class="grp" style="left:503px;top:464px;width:292px;height:130px;"></div>
<div class="" style="left:509.5px;top:459px;width:34px;height:13px;background:#d4d0c8;"></div>
<span class="t " style="left:511.5px;top:459.00px;font-size:13px;transform:scaleX(0.762);">Trigger</span>
<span class="t " style="left:528.5px;top:474.00px;font-size:13px;transform:scaleX(0.759);">Primary</span>
<span class="t " style="left:604.5px;top:473.50px;font-size:13px;transform:scaleX(0.821);">Secondary</span>
<div class="bd " style="left:507px;top:488px;width:40px;height:20px;"></div>
<div class="bu " style="left:547px;top:488px;width:40px;height:20px;"></div>
<div class="bu " style="left:590px;top:488px;width:40px;height:20px;"></div>
<div class="bu " style="left:630px;top:488px;width:40px;height:20px;"></div>
<span class="t " style="left:523.5px;top:492.50px;font-size:13px;transform:scaleX(0.923);">A</span>
<div class="led" style="left:537px;top:494px;width:6px;height:6px;background:#9acd0a;"></div>
<span class="t dis" style="left:606px;top:492.00px;font-size:13px;transform:scaleX(0.865);">A</span>
<div class="led" style="left:619px;top:497px;width:6px;height:6px;background:#a8c8f0;"></div>
<svg class="a" style="left:630px;top:488px" width="40" height="20" viewBox="0 0 40 20" ><path d="M9 2.5H16.5V16.5H24" stroke="#808080" stroke-width="1" fill="none"/></svg>
<div class="" style="left:655px;top:495px;width:7px;height:5px;border:1px solid #808080;"></div>
<div class="bu " style="left:507px;top:507px;width:40px;height:20px;"></div>
<div class="bu " style="left:547px;top:507px;width:40px;height:20px;"></div>
<div class="bu " style="left:590px;top:507px;width:40px;height:20px;"></div>
<div class="bu " style="left:630px;top:507px;width:40px;height:20px;"></div>
<span class="t " style="left:522.5px;top:510.50px;font-size:13px;transform:scaleX(0.807);">B</span>
<div class="led" style="left:536px;top:516px;width:6px;height:6px;background:#e8400a;"></div>
<span class="t dis" style="left:606px;top:511.00px;font-size:13px;transform:scaleX(0.807);">B</span>
<div class="led" style="left:619px;top:516px;width:6px;height:6px;background:#a8c8f0;"></div>
<svg class="a" style="left:630px;top:507px" width="40" height="20" viewBox="0 0 40 20" ><path d="M9 2.5H16.5V16.5H24" stroke="#808080" stroke-width="1" fill="none"/></svg>
<div class="" style="left:655px;top:514px;width:7px;height:5px;border:1px solid #808080;"></div>
<div class="bu " style="left:507px;top:526px;width:40px;height:20px;"></div>
<div class="bu " style="left:547px;top:526px;width:40px;height:20px;"></div>
<div class="bu " style="left:590px;top:526px;width:40px;height:20px;"></div>
<div class="bu " style="left:630px;top:526px;width:40px;height:20px;"></div>
<span class="t " style="left:522.5px;top:529.50px;font-size:13px;transform:scaleX(0.807);">E</span>
<div class="led" style="left:536px;top:535px;width:6px;height:6px;background:#e8400a;"></div>
<span class="t dis" style="left:606px;top:530.00px;font-size:13px;transform:scaleX(0.807);">E</span>
<div class="led" style="left:619px;top:535px;width:6px;height:6px;background:#a8c8f0;"></div>
<svg class="a" style="left:630px;top:526px" width="40" height="20" viewBox="0 0 40 20" ><path d="M9 2.5H16.5V16.5H24" stroke="#808080" stroke-width="1" fill="none"/></svg>
<div class="" style="left:655px;top:533px;width:7px;height:5px;border:1px solid #808080;"></div>
<svg class="a" style="left:547px;top:488px" width="40" height="20" viewBox="0 0 40 20" ><path d="M9 16H16.5V3H24" stroke="#000" stroke-width="2" fill="none"/></svg>
<div class="" style="left:572px;top:495px;width:7px;height:5px;background:#00e000;border:1px solid #000;"></div>
<svg class="a" style="left:547px;top:507px" width="40" height="20" viewBox="0 0 40 20" ><path d="M9 16.5H16.5V2.5H24" stroke="#808080" stroke-width="1" fill="none"/></svg>
<div class="" style="left:572px;top:514px;width:7px;height:5px;border:1px solid #808080;"></div>
<svg class="a" style="left:547px;top:526px" width="40" height="20" viewBox="0 0 40 20" ><path d="M9 2.5H16.5V16.5H24" stroke="#808080" stroke-width="1" fill="none"/></svg>
<div class="" style="left:572px;top:533px;width:7px;height:5px;border:1px solid #808080;"></div>
<span class="t " style="left:508px;top:552.00px;font-size:13px;transform:scaleX(0.755);">PFL</span>
<div class="sunk" style="left:529px;top:549px;width:46px;height:21px;"></div>
<span class="t " style="left:558.27px;top:552.00px;font-size:13px;transform-origin:100% 50%;transform:scaleX(0.728);color:#808080;">0s</span>
<div class="bu " style="left:576px;top:549px;width:11px;height:10px;"></div>
<div class="bu " style="left:576px;top:559px;width:11px;height:11px;"></div>
<svg class="a" style="left:576px;top:549px" width="11" height="21" viewBox="0 0 11 21" ><polygon points="3.0,7.5 9.0,7.5 6.0,4.5" fill="#fff"/><polygon points="3.0,15.0 9.0,15.0 6.0,18.0" fill="#fff"/><polygon points="2.0,6.5 8.0,6.5 5.0,3.5" fill="#808080"/><polygon points="2.0,14.0 8.0,14.0 5.0,17.0" fill="#808080"/></svg>
<span class="t " style="left:508.5px;top:575.00px;font-size:13px;transform:scaleX(0.781);">NOP</span>
<div class="sunk" style="left:538px;top:571px;width:37px;height:21px;"></div>
<span class="t " style="left:563.27px;top:575.00px;font-size:13px;transform-origin:100% 50%;transform:scaleX(0.553);color:#808080;">1</span>
<div class="bu " style="left:576px;top:571px;width:11px;height:10px;"></div>
<div class="bu " style="left:576px;top:581px;width:11px;height:11px;"></div>
<svg class="a" style="left:576px;top:571px" width="11" height="21" viewBox="0 0 11 21" ><polygon points="3.0,7.5 9.0,7.5 6.0,4.5" fill="#fff"/><polygon points="3.0,15.0 9.0,15.0 6.0,18.0" fill="#fff"/><polygon points="2.0,6.5 8.0,6.5 5.0,3.5" fill="#808080"/><polygon points="2.0,14.0 8.0,14.0 5.0,17.0" fill="#808080"/></svg>
<span class="t " style="left:591.5px;top:552.00px;font-size:13px;transform:scaleX(0.755);">SFL</span>
<div class="sunk" style="left:612px;top:549px;width:46px;height:21px;"></div>
<span class="t " style="left:641.27px;top:552.00px;font-size:13px;transform-origin:100% 50%;transform:scaleX(0.728);color:#808080;">0s</span>
<div class="bu " style="left:659px;top:549px;width:11px;height:10px;"></div>
<div class="bu " style="left:659px;top:559px;width:11px;height:11px;"></div>
<svg class="a" style="left:659px;top:549px" width="11" height="21" viewBox="0 0 11 21" ><polygon points="3.0,7.5 9.0,7.5 6.0,4.5" fill="#fff"/><polygon points="3.0,15.0 9.0,15.0 6.0,18.0" fill="#fff"/><polygon points="2.0,6.5 8.0,6.5 5.0,3.5" fill="#808080"/><polygon points="2.0,14.0 8.0,14.0 5.0,17.0" fill="#808080"/></svg>
<span class="t " style="left:592px;top:575.00px;font-size:13px;transform:scaleX(0.781);">NOS</span>
<div class="sunk" style="left:621px;top:571px;width:37px;height:21px;"></div>
<span class="t " style="left:646.27px;top:575.00px;font-size:13px;transform-origin:100% 50%;transform:scaleX(0.553);color:#808080;">1</span>
<div class="bu " style="left:659px;top:571px;width:11px;height:10px;"></div>
<div class="bu " style="left:659px;top:581px;width:11px;height:11px;"></div>
<svg class="a" style="left:659px;top:571px" width="11" height="21" viewBox="0 0 11 21" ><polygon points="3.0,7.5 9.0,7.5 6.0,4.5" fill="#fff"/><polygon points="3.0,15.0 9.0,15.0 6.0,18.0" fill="#fff"/><polygon points="2.0,6.5 8.0,6.5 5.0,3.5" fill="#808080"/><polygon points="2.0,14.0 8.0,14.0 5.0,17.0" fill="#808080"/></svg>
<span class="t " style="left:713.5px;top:474.00px;font-size:13px;transform:scaleX(0.817);">Hold-off</span>
<div class="sunk" style="left:675px;top:488px;width:83px;height:21px;"></div>
<span class="t " style="left:708.24px;top:492.00px;font-size:13px;transform-origin:100% 50%;transform:scaleX(0.821);color:#808080;">419,2ns</span>
<div class="bu " style="left:757px;top:488px;width:36px;height:21px;"></div>
<span class="t dis" style="left:764.5px;top:492.00px;font-size:13px;transform:scaleX(0.823);">Auto</span>
<div class="" style="left:675px;top:509px;width:118px;height:18px;border-top:1px solid #808080;border-left:1px solid #808080;border-bottom:1px solid #fff;border-right:1px solid #fff;"></div>
<div class="dith" style="left:676px;top:510px;width:116px;height:16px;"></div>
<div class="bu " style="left:676px;top:510px;width:16px;height:16px;"></div>
<div class="bu " style="left:776px;top:510px;width:16px;height:16px;"></div>
<svg class="a" style="left:676px;top:510px" width="116" height="16" viewBox="0 0 116 16" ><polygon points="10.5,5.0 10.5,13.0 6.5,9.0" fill="#fff"/><polygon points="106.5,5.0 106.5,13.0 110.5,9.0" fill="#fff"/><polygon points="9.5,4.0 9.5,12.0 5.5,8.0" fill="#808080"/><polygon points="105.5,4.0 105.5,12.0 109.5,8.0" fill="#808080"/></svg>
<span class="t " style="left:705px;top:538.00px;font-size:13px;transform:scaleX(0.795);">After trigger</span>
<div class="sunk" style="left:675px;top:552px;width:71px;height:21px;"></div>
<span class="t " style="left:706.58px;top:555.50px;font-size:13px;transform-origin:100% 50%;transform:scaleX(0.790);color:#808080;">400ns</span>
<div class="bu " style="left:746px;top:552px;width:30px;height:21px;"></div>
<span class="t " style="left:750.5px;top:556.00px;font-size:13px;transform:scaleX(0.802);">HSC</span>
<div class="bu " style="left:776px;top:552px;width:17px;height:21px;"></div>
<span class="t " style="left:783px;top:556.00px;font-size:13px;transform:scaleX(0.692);">s</span>
<div class="" style="left:675px;top:573px;width:118px;height:18px;border-top:1px solid #808080;border-left:1px solid #808080;border-bottom:1px solid #fff;border-right:1px solid #fff;"></div>
<div class="dith" style="left:676px;top:574px;width:116px;height:16px;"></div>
<div class="bu " style="left:676px;top:574px;width:16px;height:16px;"></div>
<div class="bu " style="left:776px;top:574px;width:16px;height:16px;"></div>
<svg class="a" style="left:676px;top:574px" width="116" height="16" viewBox="0 0 116 16" ><polygon points="10.5,5.0 10.5,13.0 6.5,9.0" fill="#fff"/><polygon points="106.5,5.0 106.5,13.0 110.5,9.0" fill="#fff"/><polygon points="9.5,4.0 9.5,12.0 5.5,8.0" fill="#808080"/><polygon points="105.5,4.0 105.5,12.0 109.5,8.0" fill="#808080"/></svg>
</div></body></html>
